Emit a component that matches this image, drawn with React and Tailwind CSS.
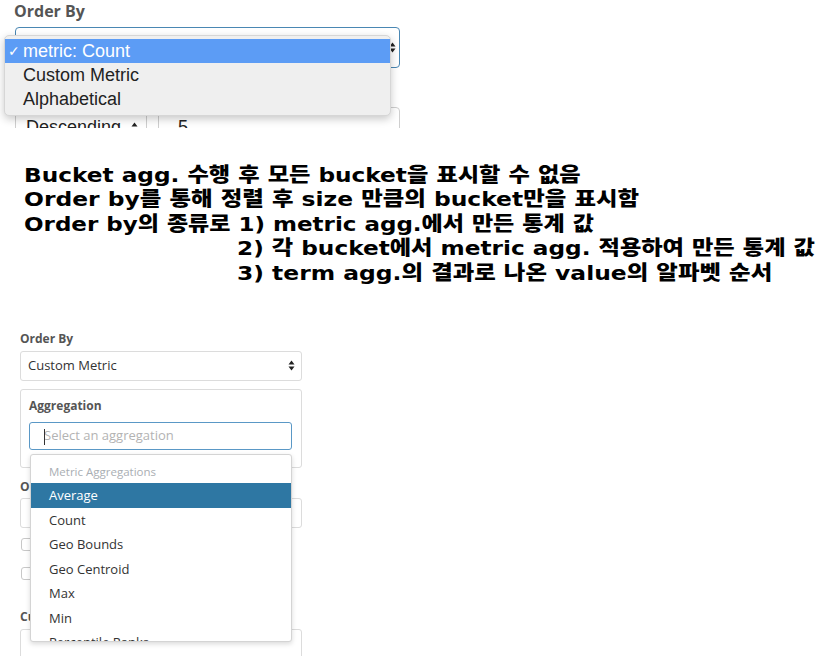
import React from "react";

const HANGUL = /([\uAC00-\uD7A3\u3131-\u318E]+)/;

function KT({ text }) {
  const parts = text.split(HANGUL);
  return (
    <>
      {parts.map((p, i) =>
        HANGUL.test(p) ? (
          <span key={i} className="font-['Noto_Sans_CJK_KR',sans-serif] font-black text-[20px]">
            {p}
          </span>
        ) : (
          <span key={i}>{p}</span>
        )
      )}
    </>
  );
}

function UpDown({ className = "" }) {
  return (
    <svg width="7" height="11" viewBox="0 0 7 11" className={className}>
      <path d="M3.5 0.5 L6.5 4.5 L0.5 4.5 Z" fill="#222" />
      <path d="M3.5 10.5 L6.5 6.5 L0.5 6.5 Z" fill="#222" />
    </svg>
  );
}

function TopSection() {
  return (
    <div className="relative h-[128px] overflow-hidden shrink-0">
      <div className="pt-[1px] pl-[14px] font-['Open_Sans',sans-serif] font-bold text-[16px] leading-[20px] text-[#555555]">
        Order By
      </div>
      <div className="ml-[15px] mt-[6px] w-[385px] h-[41px] rounded-[4px] border border-[#4a87b3] flex items-center justify-end pr-[3px]">
        <UpDown />
      </div>
      <div className="mt-[39px] ml-[15px] flex gap-[11px]">
        <div className="w-[132px] h-[40px] rounded-[4px] border border-[#cfcfcf] flex items-center pl-[10px] pr-[8px] justify-between font-['Liberation_Sans',sans-serif] text-[18px] text-[#222]">
          <span>Descending</span>
          <UpDown />
        </div>
        <div className="w-[242px] h-[40px] rounded-[4px] border border-[#cfcfcf] flex items-center pl-[19px] font-['Liberation_Sans',sans-serif] text-[18px] text-[#222]">
          5
        </div>
      </div>

      <div className="absolute left-[4px] top-[35px] w-[387px] h-[81px] rounded-[5px] bg-[#efefef] border border-[#d6d6d6] shadow-[0_3px_8px_rgba(0,0,0,0.22)] pt-[3px] font-['Liberation_Sans',sans-serif] text-[18px]">
        <div className="h-[24px] bg-[#5c9cf5] text-white flex items-center">
          <span className="w-[18px] pl-[3px] text-[14px] font-['DejaVu_Sans',sans-serif]">✓</span>
          <span>metric: Count</span>
        </div>
        <div className="h-[24px] text-[#222] flex items-center pl-[18px]">Custom Metric</div>
        <div className="h-[24px] text-[#222] flex items-center pl-[18px]">Alphabetical</div>
      </div>
    </div>
  );
}

const lines = [
  { indent: false, s: "scale-x-[1.16]", text: "Bucket agg. 수행 후 모든 bucket을 표시할 수 없음" },
  { indent: false, s: "scale-x-[1.17]", text: "Order by를 통해 정렬 후 size 만큼의 bucket만을 표시함" },
  { indent: false, s: "scale-x-[1.15]", text: "Order by의 종류로 1) metric agg.에서 만든 통계 값" },
  { indent: true, s: "scale-x-[1.16]", text: "2) 각 bucket에서 metric agg. 적용하여 만든 통계 값" },
  { indent: true, s: "scale-x-[1.17]", text: "3) term agg.의 결과로 나온 value의 알파벳 순서" },
];

function Notes() {
  return (
    <div className="mt-[34px] shrink-0 font-['DejaVu_Sans',sans-serif] font-bold text-[20px] text-black">
      {lines.map((l, i) => (
        <div
          key={i}
          className={
            "h-[24.4px] leading-[24.4px] whitespace-nowrap " +
            (l.indent ? "pl-[237px]" : "pl-[24px]")
          }
        >
          <span className={"inline-block origin-left " + l.s}>
            <KT text={l.text} />
          </span>
        </div>
      ))}
    </div>
  );
}

function Label({ children }) {
  return (
    <div className="font-['Open_Sans',sans-serif] font-bold text-[12px] leading-[16px] text-[#555555]">
      {children}
    </div>
  );
}

function BottomSection() {
  const items = ["Count", "Geo Bounds", "Geo Centroid", "Max", "Min", "Percentile Ranks"];
  return (
    <div className="relative mt-[46px] pl-[20px] flex-1 font-['Open_Sans',sans-serif]">
      <div className="w-[282px]">
        <div className="pt-[1px]">
          <Label>Order By</Label>
        </div>
        <div className="mt-[4px] h-[30px] rounded-[3px] border border-[#dcdcdc] flex items-center justify-between pl-[7px] pr-[6px] text-[13px] text-[#333]">
          <span>Custom Metric</span>
          <UpDown />
        </div>
        <div className="mt-[8px] h-[79px] rounded-[3px] border border-[#dcdcdc] pt-[8px] px-[8px]">
          <Label>Aggregation</Label>
          <div className="mt-[8px] h-[28px] w-[263px] rounded-[3px] border border-[#5a98c6] flex items-center pl-[14px] relative">
            <span className="absolute left-[14px] top-[6px] w-[1px] h-[16px] bg-[#333]" />
            <span className="text-[13px] text-[#b3b3b3]">Select an aggregation</span>
          </div>
        </div>
        <div className="mt-[11px]">
          <Label>Order</Label>
        </div>
        <div className="mt-[3px] h-[30px] rounded-[3px] border border-[#dcdcdc]" />
        <div className="mt-[10px] w-[13px] h-[13px] ml-[1px] rounded-[3px] border border-[#c8c8c8]" />
        <div className="mt-[16px] w-[13px] h-[13px] ml-[1px] rounded-[3px] border border-[#c8c8c8]" />
        <div className="mt-[29px]">
          <Label>Custom Label</Label>
        </div>
        <div className="mt-[4px] h-[30px] rounded-[3px] border border-[#dcdcdc]" />
      </div>

      <div className="absolute left-[30px] top-[124px] w-[262px] h-[188px] overflow-hidden rounded-[3px] bg-white border border-[#d4d4d4] shadow-[0_2px_5px_rgba(0,0,0,0.15)] pt-[5px]">
        <div className="h-[23px] flex items-center pl-[18px] text-[11.5px] text-[#a9aeb3]">
          Metric Aggregations
        </div>
        <div className="h-[25px] flex items-center pl-[18px] text-[13px] bg-[#2e77a3] text-white">
          Average
        </div>
        {items.map((it) => (
          <div key={it} className="h-[24.6px] flex items-center pl-[18px] text-[13px] text-[#333]">
            {it}
          </div>
        ))}
      </div>
    </div>
  );
}

export default function App() {
  return (
    <div className="w-[824px] h-[656px] overflow-hidden bg-white flex flex-col">
      <TopSection />
      <Notes />
      <BottomSection />
    </div>
  );
}
